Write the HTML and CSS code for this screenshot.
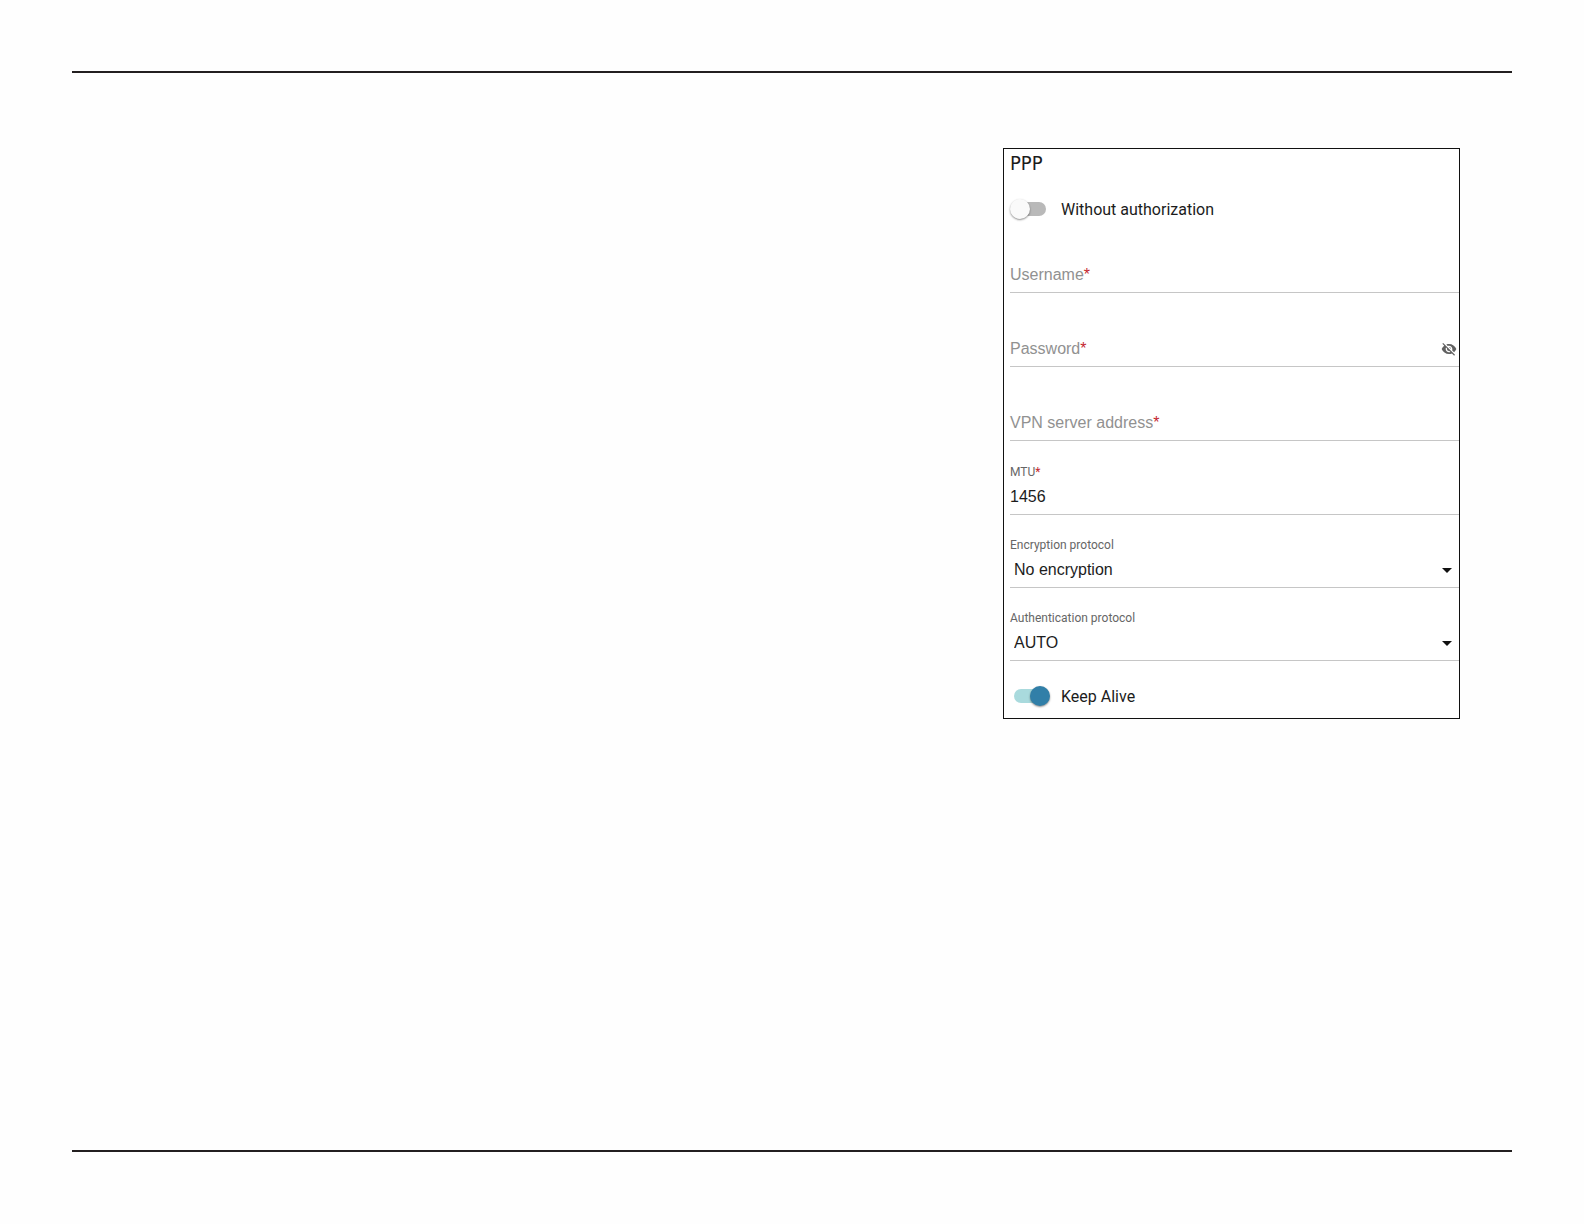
FILE: index.html
```html
<!DOCTYPE html>
<html lang="en">
<head>
    <meta charset="UTF-8">
    <meta name="viewport" content="width=device-width, initial-scale=1.0">
    <title>PPP</title>
    <link rel="stylesheet" href="styles.css">
</head>
<body>
    <main class="sheet">
        <form class="panel">
            <h1>PPP</h1>

            <div class="switch-row">
                <input type="checkbox" class="switch" id="no-auth">
                <label for="no-auth">Without authorization</label>
            </div>

            <div class="field empty">
                <label for="username">Username<span class="required">*</span></label>
                <input type="text" id="username">
            </div>

            <div class="field empty">
                <label for="password">Password<span class="required">*</span></label>
                <input type="password" id="password">
                <button type="button" class="reveal" aria-label="Show password">
                    <svg viewBox="0 0 24 24" width="16" height="16"><path d="M12 7c2.76 0 5 2.24 5 5 0 .65-.13 1.26-.36 1.83l2.92 2.92c1.51-1.26 2.7-2.89 3.43-4.75-1.73-4.39-6-7.5-11-7.5-1.4 0-2.74.25-3.98.7l2.16 2.16C10.74 7.13 11.35 7 12 7zM2 4.27l2.28 2.28.46.46C3.08 8.3 1.78 10.02 1 12c1.73 4.39 6 7.5 11 7.5 1.55 0 3.03-.3 4.38-.84l.42.42L19.73 22 21 20.73 3.27 3 2 4.27zM7.53 9.8l1.55 1.55c-.05.21-.08.43-.08.65 0 1.66 1.34 3 3 3 .22 0 .44-.03.65-.08l1.55 1.55c-.67.33-1.41.53-2.2.53-2.76 0-5-2.24-5-5 0-.79.2-1.53.53-2.2zm4.31-.78l3.15 3.15.02-.16c0-1.66-1.34-3-3-3l-.17.01z"/></svg>
                </button>
            </div>

            <div class="field empty">
                <label for="server">VPN server address<span class="required">*</span></label>
                <input type="text" id="server">
            </div>

            <div class="field">
                <label for="mtu">MTU<span class="required">*</span></label>
                <input type="text" id="mtu" value="1456">
            </div>

            <div class="field select-field">
                <label for="encryption">Encryption protocol</label>
                <select id="encryption">
                    <option>No encryption</option>
                </select>
                <svg class="arrow" viewBox="0 0 10 5" width="10" height="5"><path d="M0 0h10L5 5z"/></svg>
            </div>

            <div class="field select-field">
                <label for="authentication">Authentication protocol</label>
                <select id="authentication">
                    <option>AUTO</option>
                </select>
                <svg class="arrow" viewBox="0 0 10 5" width="10" height="5"><path d="M0 0h10L5 5z"/></svg>
            </div>

            <div class="switch-row last">
                <input type="checkbox" class="switch" id="keep-alive" checked>
                <label for="keep-alive">Keep Alive</label>
            </div>
        </form>
    </main>
</body>
</html>
```
FILE: styles.css
```css
* {
    box-sizing: border-box;
}
body {
    margin: 0;
    padding: 71px 72px 72px;
    min-height: 100vh;
    display: flex;
    background-color: #fefefe;
    color: #1c1c1c;
    font-family: Roboto, "Open Sans", sans-serif;
}
.sheet {
    flex: 1;
    display: flex;
    justify-content: flex-end;
    align-items: flex-start;
    padding: 75px 52px;
    border-top: 2px solid #231f20;
    border-bottom: 2px solid #231f20;
}
.panel {
    width: 100%;
    max-width: 457px;
    padding: 0 0 12px 6px;
    border: 1px solid #111;
    background-color: #fff;
}
h1 {
    margin: 0 0 22px;
    font-family: "DejaVu Sans Condensed", "Open Sans", sans-serif;
    font-size: 20px;
    line-height: 28px;
    font-weight: normal;
}
.switch-row {
    display: flex;
    align-items: center;
    gap: 11px;
    height: 20px;
    font-size: 16px;
}
.switch-row.last {
    margin-top: 25px;
}
.switch {
    appearance: none;
    position: relative;
    width: 40px;
    height: 20px;
    margin: 0;
    cursor: pointer;
}
.switch::before {
    content: '';
    position: absolute;
    top: 3px;
    left: 2px;
    width: 34px;
    height: 14px;
    border-radius: 7px;
    background-color: #b9b9b9;
}
.switch::after {
    content: '';
    position: absolute;
    top: 0;
    left: 0;
    width: 20px;
    height: 20px;
    border-radius: 50%;
    background-color: #fafafa;
    box-shadow: 0 1px 2px rgba(0,0,0,0.45);
}
.switch:checked::before {
    left: 4px;
    background-color: #a9dadd;
}
.switch:checked::after {
    left: 20px;
    background-color: #317fa8;
}
.field {
    position: relative;
    display: flex;
    flex-direction: column;
    justify-content: flex-end;
    height: 74px;
}
.select-field {
    height: 73px;
}
.field label {
    font-size: 12px;
    line-height: 16px;
    color: #666;
}
.field.empty label {
    position: absolute;
    left: 0;
    bottom: 1px;
    font-family: "Liberation Sans", Arial, sans-serif;
    font-size: 16px;
    line-height: 34px;
    color: #919191;
    pointer-events: none;
}
.field .required {
    color: #c4262e;
}
.field input,
.field select {
    appearance: none;
    width: 100%;
    height: 35px;
    padding: 0 0 1px;
    border: 0;
    border-bottom: 1px solid #c6c6c6;
    border-radius: 0;
    background: transparent;
    color: #1c1c1c;
    font-family: "Liberation Sans", Arial, sans-serif;
    font-size: 16px;
    outline: none;
}
.field select {
    padding-left: 4px;
}
.reveal {
    position: absolute;
    right: 2px;
    bottom: 10px;
    width: 16px;
    height: 16px;
    padding: 0;
    border: 0;
    background: none;
    cursor: pointer;
}
.reveal svg {
    display: block;
    fill: #616161;
}
.arrow {
    position: absolute;
    right: 7px;
    bottom: 15px;
    fill: #111;
    pointer-events: none;
}
```
